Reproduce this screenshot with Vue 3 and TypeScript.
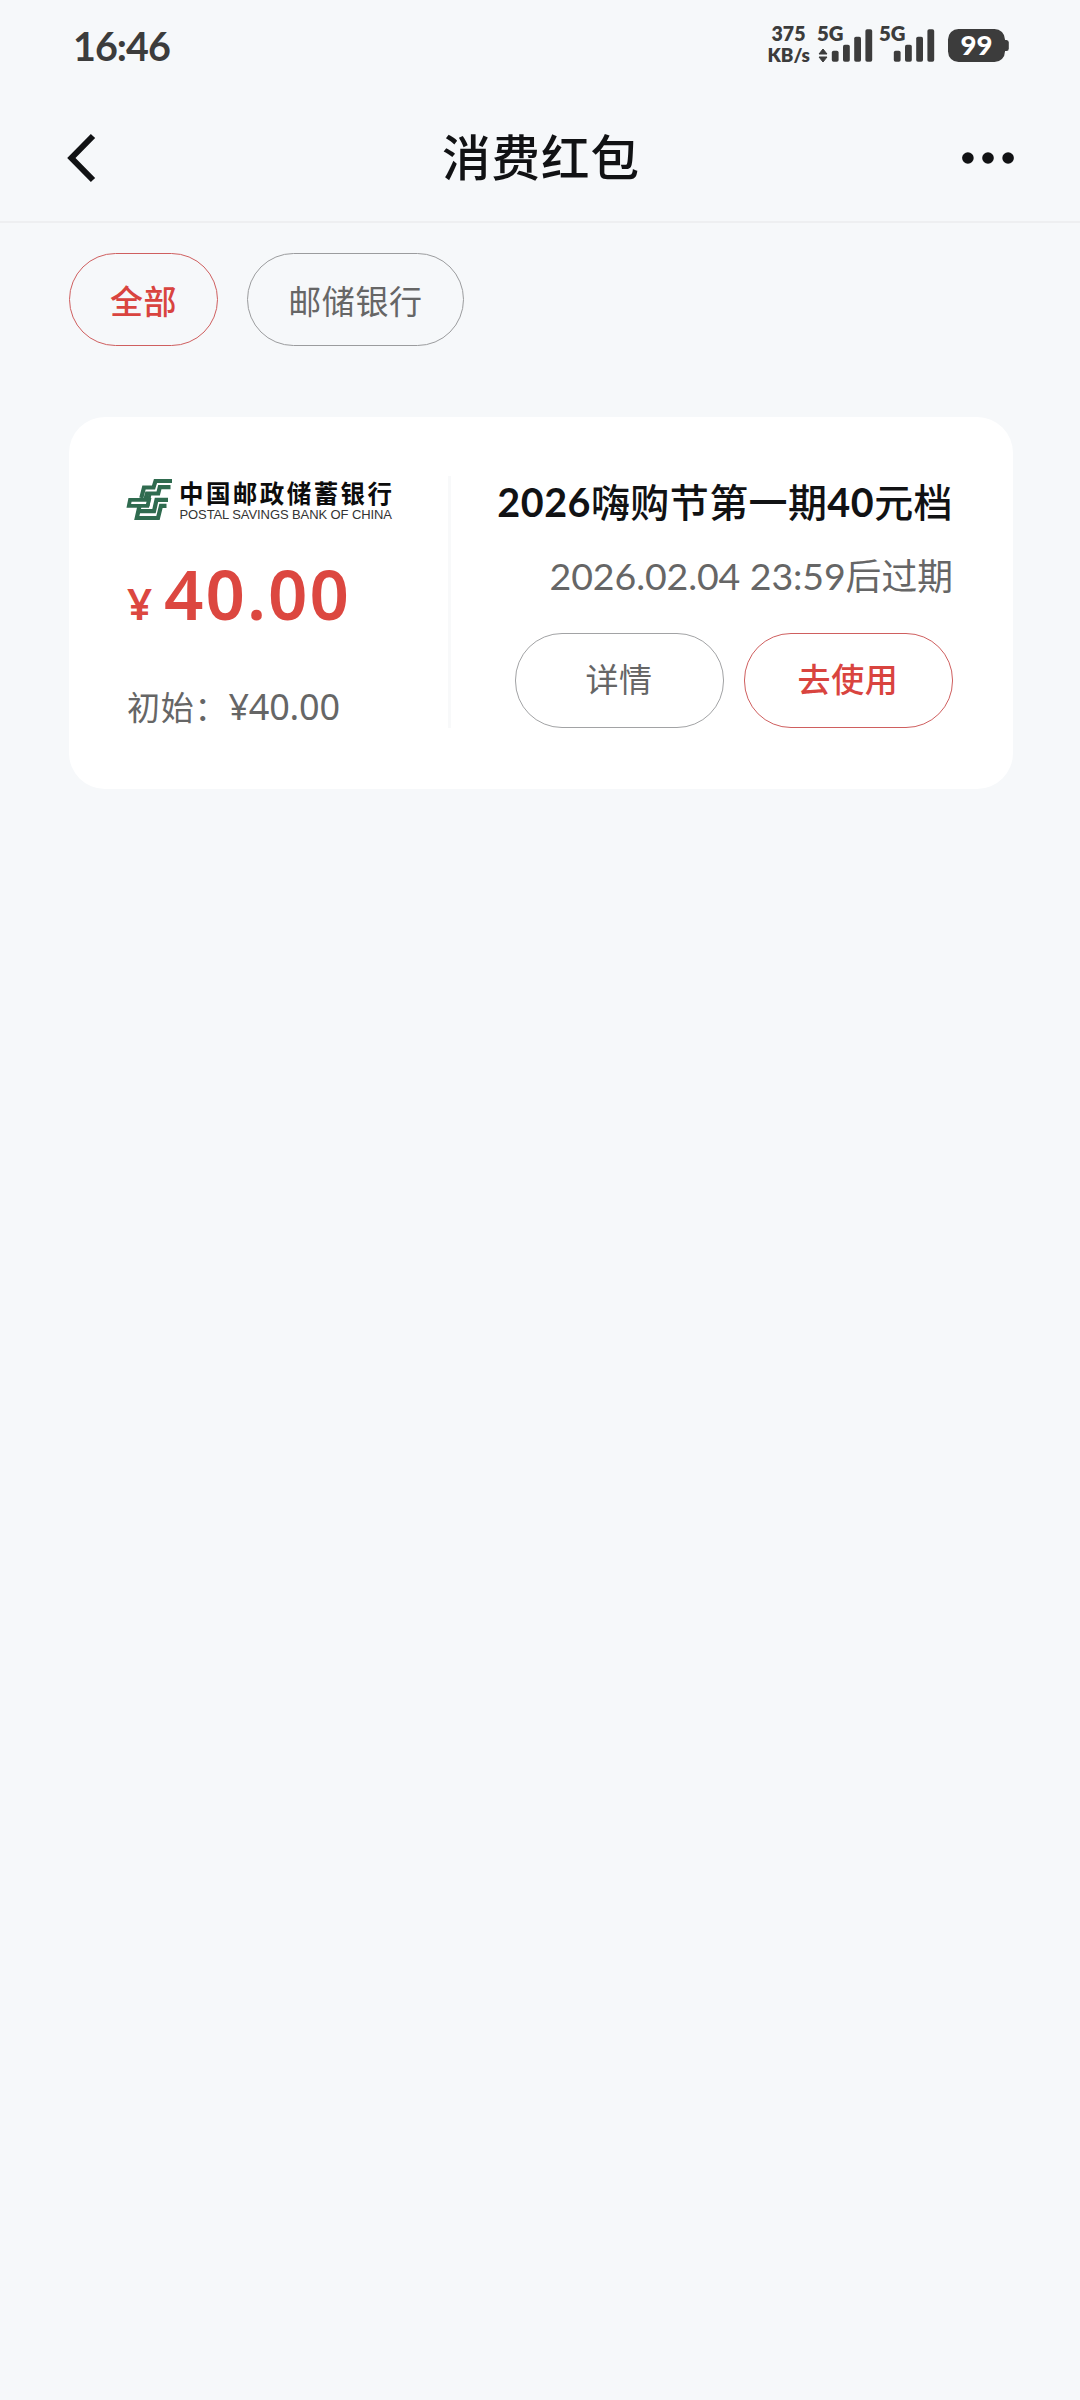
<script setup lang="ts">
import { ref } from 'vue'

interface Coupon {
  id: number
  amount: string
  initial: string
  title: string
  expire: string
}

const filters: string[] = ['全部', '邮储银行']
const active = ref<number>(0)
const bars = [
  { x: 0, h: 11 },
  { x: 11.2, h: 17 },
  { x: 22.4, h: 25 },
  { x: 33.6, h: 32.5 },
]
const coupons: Coupon[] = [
  { id: 1, amount: '40.00', initial: '¥40.00', title: '2026嗨购节第一期40元档', expire: '2026.02.04 23:59后过期' },
]

// Splits a line into digit runs and Chinese runs so each gets its own weight and size.
const runs = (s: string): string[] => s.match(/[\d.: ]+|[^\d.: ]+/g) ?? []
const isNumber = (s: string): boolean => /^\d/.test(s)
</script>

<template>
  <div class="page">
    <div class="status">
      <span class="time">16:46</span>
      <svg class="indicators" width="244" height="44" viewBox="0 0 244 44">
        <g fill="#3c3c3c" font-family="Lato, 'Noto Sans', sans-serif" font-weight="800">
          <text x="3.5" y="18.5" font-size="20" textLength="34" lengthAdjust="spacingAndGlyphs">375</text>
          <text x="-.5" y="40" font-size="18.5" textLength="42.5" lengthAdjust="spacingAndGlyphs">KB/s</text>
          <text x="49" y="19" font-size="20" textLength="26.5" lengthAdjust="spacingAndGlyphs">5G</text>
          <text x="111" y="19" font-size="20" textLength="26.5" lengthAdjust="spacingAndGlyphs">5G</text>
          <path d="M51 32L55 27L59 32zM51 35L55 40L59 35z" stroke="#3c3c3c" stroke-width="1" stroke-linejoin="round" />
          <rect v-for="b in bars" :key="'a' + b.x" :x="63.8 + b.x" :y="39.7 - b.h" width="6.8" :height="b.h" rx="1.8" />
          <rect v-for="b in bars" :key="'b' + b.x" :x="125.8 + b.x" :y="39.7 - b.h" width="6.8" :height="b.h" rx="1.8" />
          <rect x="180" y="7" width="57" height="33" rx="10.5" />
          <path d="M236 18h2.5q2.3 0 2.3 2.5v6q0 2.5-2.3 2.5h-2.5z" />
          <text x="192.5" y="33" font-size="26.5" font-weight="900" fill="#fff" textLength="32" lengthAdjust="spacingAndGlyphs">99</text>
        </g>
      </svg>
    </div>

    <header class="nav">
      <svg width="30" height="50" viewBox="0 0 30 50">
        <path d="M26 3L4.4 25L26 47" fill="none" stroke="#111214" stroke-width="6" />
      </svg>
      <h1>消费红包</h1>
      <svg width="52" height="12" viewBox="0 0 52 12" fill="#111214">
        <circle cx="5.9" cy="6" r="5.8" />
        <circle cx="26" cy="6" r="5.8" />
        <circle cx="46.1" cy="6" r="5.8" />
      </svg>
    </header>

    <div class="filters">
      <button v-for="(f, i) in filters" :key="f" class="pill chip" :class="{ red: active === i }" @click="active = i">{{ f }}</button>
    </div>

    <section v-for="c in coupons" :key="c.id" class="card">
      <div class="left">
        <svg class="logo" width="268" height="46" viewBox="0 0 268 46">
          <g fill="none" stroke="#2f6b4f" stroke-width="4.2">
            <path d="M45 5H28.5L26.5 11.5H17L14.3 22" />
            <path d="M43.5 11.2H32.8L31.2 17.5H20L18.5 23" />
            <path d="M3 23.8H22L20.5 29.8H1.8Z" stroke-width="3.8" />
            <path d="M41 23.8H29.5L27 35.2H13" />
            <path d="M39.5 29.8H34L31 42H9.8L12.5 30" />
            <path d="M23 17.5L21 30" stroke-width="3" />
          </g>
          <g fill="#0c0c0c">
            <text x="52" y="27" font-family="'Noto Sans CJK SC', sans-serif" font-weight="700" font-size="24.5" textLength="213" lengthAdjust="spacing">中国邮政储蓄银行</text>
            <text x="52.5" y="43" font-family="'Liberation Sans', sans-serif" font-size="13" fill="#333" textLength="212.5" lengthAdjust="spacing">POSTAL SAVINGS BANK OF CHINA</text>
          </g>
        </svg>
        <div class="amount"><span class="yen">¥</span><span class="num">{{ c.amount }}</span></div>
        <div class="initial"><span>初始：</span><span class="init-num">{{ c.initial }}</span></div>
      </div>
      <div class="rule"></div>
      <div class="right">
        <div class="title">
          <span v-for="(r, i) in runs(c.title)" :key="i" :class="isNumber(r) ? 'digits' : 'han'">{{ r }}</span>
        </div>
        <div class="expire">
          <span v-for="(r, i) in runs(c.expire)" :key="i" :class="isNumber(r) ? 'date' : 'note'">{{ r }}</span>
        </div>
        <div class="actions">
          <button class="pill action">详情</button>
          <button class="pill action red">去使用</button>
        </div>
      </div>
    </section>
  </div>
</template>

<style>
body {
  background: #f6f8fa;
}
</style>

<style scoped>
.page {
  width: 1080px;
  min-height: 2400px;
  box-sizing: border-box;
  background: #f6f8fa;
  font-family: Lato, 'Noto Sans CJK SC', sans-serif;
  color: #111214;
}
.status {
  height: 95px;
  padding: 22px 68px 0 73px;
  box-sizing: border-box;
  display: flex;
  justify-content: space-between;
  align-items: flex-start;
}
.time {
  font-size: 39.5px;
  line-height: 48px;
  font-weight: 700;
  letter-spacing: -1px;
  color: #3c3c3c;
}
.indicators {
  display: block;
  overflow: visible;
}
.nav {
  height: 128px;
  box-sizing: border-box;
  border-bottom: 2px solid #eeeff1;
  padding: 0 66px 0 67px;
  display: flex;
  align-items: center;
  justify-content: space-between;
}
.nav h1 {
  margin: -3px 0 0 23px;
  font-size: 48.5px;
  line-height: 70px;
  letter-spacing: 1px;
  font-weight: 500;
}
.filters {
  display: flex;
  gap: 29px;
  padding: 30px 69px 0;
}
.pill {
  box-sizing: border-box;
  margin: 0;
  border: 1px solid #9b9c9e;
  border-radius: 47px;
  background: transparent;
  color: #666;
  font-family: inherit;
  font-weight: 400;
  font-size: 33px;
  letter-spacing: 0.6px;
  line-height: 48px;
}
.pill.red {
  color: #d9443f;
  border-color: #cf5f5f;
  font-weight: 500;
}
.chip {
  height: 93px;
  padding: 3px 40px 0;
}
.card {
  margin: 71px 67px 0 69px;
  height: 372px;
  box-sizing: border-box;
  padding: 59px 60px 60px 58px;
  border-radius: 36px;
  background: #fff;
  display: flex;
}
.left {
  width: 321px;
}
.logo {
  display: block;
  overflow: visible;
}
.amount {
  display: flex;
  align-items: baseline;
  margin-top: 31px;
  height: 80px;
  line-height: 80px;
  color: #dc4740;
  font-family: 'Noto Sans', sans-serif;
  font-weight: 600;
}
.yen {
  width: 37px;
  font-size: 44px;
}
.num {
  font-size: 69px;
  letter-spacing: 2px;
}
.initial {
  margin-top: 50px;
  height: 48px;
  line-height: 48px;
  font-size: 33px;
  letter-spacing: 0.8px;
  color: #666;
  display: flex;
}
.init-num {
  font-family: 'Noto Sans', sans-serif;
  font-size: 36px;
  letter-spacing: -0.2px;
}
.rule {
  width: 3px;
  height: 252px;
  background: #f8f9fa;
}
.right {
  flex: 1;
  display: flex;
  flex-direction: column;
  align-items: flex-end;
}
.title {
  display: flex;
  align-items: baseline;
  height: 60px;
  line-height: 52px;
  font-size: 39px;
  letter-spacing: 0.4px;
  white-space: nowrap;
}
.digits {
  font-size: 39.5px;
  font-weight: 700;
  letter-spacing: 0.5px;
}
.han {
  font-weight: 500;
}
.expire {
  display: flex;
  align-items: baseline;
  margin-top: 12px;
  height: 56px;
  line-height: 56px;
  color: #666;
  white-space: nowrap;
}
.date {
  font-size: 37.5px;
  letter-spacing: -0.1px;
  white-space: pre;
}
.note {
  font-size: 35.8px;
}
.actions {
  display: flex;
  gap: 20px;
  margin-top: 29px;
}
.action {
  width: 209px;
  height: 95px;
  padding: 0 1px 3px 0;
  border-color: #a2a3a5;
}
</style>
